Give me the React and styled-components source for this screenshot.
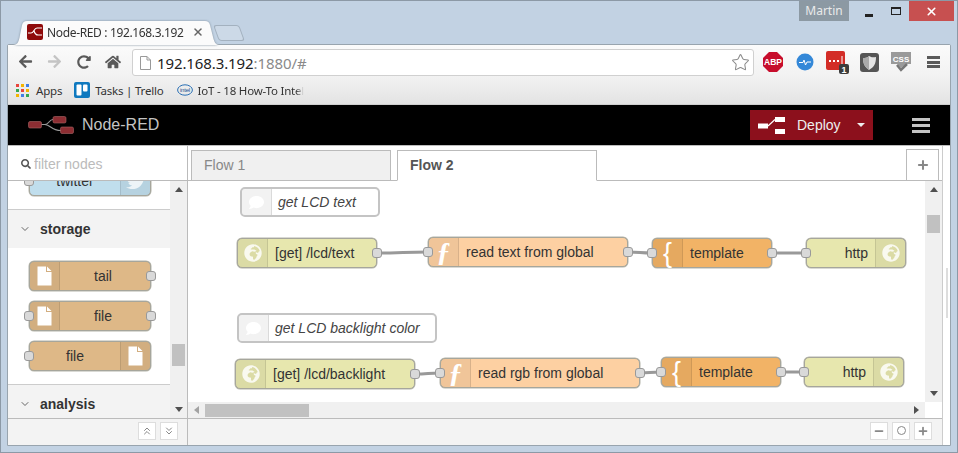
import React from 'react';
import styled, { createGlobalStyle } from 'styled-components';
import { FaArrowLeft, FaArrowRight, FaHome, FaRedoAlt, FaGlobeAfrica, FaComment, FaTwitter, FaSearch } from 'react-icons/fa';
import { Star, Plus, Minus, ChevronDown, ChevronsUp, ChevronsDown, X } from 'lucide-react';

const GlobalStyle = createGlobalStyle`
  html, body { margin: 0; padding: 0; background: #c2d2e3; }
  * { box-sizing: border-box; }
`;

// browser chrome
const Window = styled.div`
  width: 958px;
  height: 453px;
  display: flex;
  flex-direction: column;
  overflow: hidden;
  background: #c2d2e3;
  border: 1px solid #8c99a6;
  font-family: "Liberation Sans", Arial, sans-serif;
`;

const TitleBar = styled.div`
  height: 20px;
  flex: none;
  display: flex;
  justify-content: flex-end;
  padding-right: 3px;
`;

const UserBadge = styled.div`
  width: 50px;
  margin-right: 6px;
  background: #8c99a3;
  color: #eaeaea;
  font: 12px/20px "Noto Sans", sans-serif;
  text-align: center;
`;

const WinButton = styled.div`
  width: ${p => p.$w || 27}px;
  display: flex;
  align-items: center;
  justify-content: center;
  background: ${p => p.$bg || 'transparent'};
`;

const MinGlyph = styled.div`
  width: 8px;
  height: 3px;
  margin-top: 8px;
  background: #222;
`;

const MaxGlyph = styled.div`
  width: 10px;
  height: 8px;
  border: 1px solid #222;
  border-top-width: 2px;
  margin-top: -1px;
`;

const TabStrip = styled.div`
  height: 23px;
  flex: none;
  display: flex;
  align-items: flex-start;
  padding-left: 12px;
  position: relative;
  z-index: 2;
`;

const TabOutline = styled.div`
  filter: drop-shadow(0 0 1px #7f8e9c);
`;

const BrowserTab = styled.div`
  width: 206px;
  height: 24px;
  background: #fbfbfb;
  display: flex;
  align-items: center;
  padding: 0 0 2px 14px;
  clip-path: path('M0 24 C5 24 6 20 7 14 L9 4 C10 1 11 0 14 0 L192 0 C195 0 196 1 197 4 L200 16 C201 21 203 24 206 24 Z');
`;

const Favicon = styled.svg`
  width: 16px;
  height: 16px;
  flex: none;
  margin-right: 4px;
`;

const TabTitle = styled.span`
  font: 12px "Noto Sans", sans-serif;
  letter-spacing: -0.35px;
  color: #333;
  white-space: nowrap;
`;

const TabClose = styled(X)`
  margin-left: 8px;
  color: #666;
`;

const NewTab = styled.div`
  width: 26px;
  height: 16px;
  margin: 4px 0 0 -3px;
  background: #ccd9e7;
  border: 1px solid #a3b1bf;
  border-radius: 3px;
  transform: skewX(20deg);
`;

const Browser = styled.div`
  height: 402px;
  margin: 0 6px;
  flex: none;
  display: flex;
  flex-direction: column;
  background: #fff;
  border: 1px solid #98a4ae;
  border-radius: 2px 2px 0 0;
`;

const Toolbar = styled.div`
  height: 31px;
  flex: none;
  display: flex;
  align-items: center;
  padding-left: 3px;
  background: linear-gradient(#fbfbfb, #f2f2f2);
`;

const ToolButton = styled.div`
  width: 29px;
  height: 29px;
  margin-top: 2px;
  flex: none;
  display: flex;
  align-items: center;
  justify-content: center;
  color: ${p => p.$off ? '#c4c4c4' : '#5a5a5a'};
`;

const AddressBar = styled.div`
  width: 622px;
  height: 27px;
  margin: 4px 3px 0 5px;
  flex: none;
  display: flex;
  align-items: center;
  padding: 0 3px 0 7px;
  background: #fff;
  border: 1px solid #d0d0d0;
  border-radius: 3px;
`;

const Url = styled.div`
  flex: 1;
  margin-left: 6px;
  font: 15px "Noto Sans", sans-serif;
  letter-spacing: -0.1px;
  color: #222;
  span { color: #8a8a8a; }
`;

const ExtSlot = styled.div`
  width: 32px;
  height: 29px;
  flex: none;
  margin-top: 3px;
  display: flex;
  align-items: center;
  justify-content: center;
`;

const MenuBars = styled.div`
  width: 13px;
  height: 12px;
  border-top: 3px solid #5a5a5a;
  border-bottom: 3px solid #5a5a5a;
  position: relative;
  &::after {
    content: '';
    position: absolute;
    left: 0;
    right: 0;
    top: 1.5px;
    height: 3px;
    background: #5a5a5a;
  }
`;

const Bookmarks = styled.div`
  height: 29px;
  flex: none;
  display: flex;
  align-items: center;
  padding-left: 8px;
  background: linear-gradient(#f2f2f2, #e3e3e3);
  border-bottom: 1px solid #cfcfcf;
  overflow: hidden;
`;

const Bookmark = styled.div`
  display: flex;
  align-items: center;
  gap: ${p => p.$gap || 5}px;
  margin-right: ${p => p.$mr || 12}px;
  font: 11.5px "Noto Sans", sans-serif;
  letter-spacing: -0.2px;
  color: #333;
  white-space: nowrap;
`;

const FadedText = styled.span`
  -webkit-mask-image: linear-gradient(90deg, #000 92%, transparent);
  mask-image: linear-gradient(90deg, #000 92%, transparent);
`;

const AppsGrid = styled.div`
  display: grid;
  grid-template-columns: repeat(3, 3px);
  grid-auto-rows: 3px;
  gap: 2px;
`;

const AppDot = styled.i`
  background: ${p => p.$c};
`;

// node-red header
const Header = styled.header`
  height: 41px;
  flex: none;
  display: flex;
  align-items: center;
  padding: 0 20px;
  background: #000;
  border-bottom: 1px solid #bdbdbd;
`;

const Brand = styled.div`
  flex: 1;
  display: flex;
  align-items: center;
  gap: 8px;
  color: #c4c4c4;
  font-size: 16px;
`;

const LogoSvg = styled.svg`
  width: 46px;
  height: 18px;
  flex: none;
`;

const DeployButton = styled.div`
  width: 123px;
  height: 30px;
  display: flex;
  align-items: center;
  padding-left: 8px;
  background: #8c101c;
  color: #eee;
  font-size: 14px;
`;

const DeployLabel = styled.span`
  margin: 0 16px 0 12px;
`;

const Caret = styled.div`
  width: 0;
  height: 0;
  border-left: 4px solid transparent;
  border-right: 4px solid transparent;
  border-top: 4px solid ${p => p.$c || '#eee'};
`;

const Hamburger = styled.div`
  width: 18px;
  margin-left: 39px;
  display: flex;
  flex-direction: column;
  gap: 3px;
  i { height: 3px; background: #c4c4c4; }
`;

// main editor
const Main = styled.div`
  flex: 1;
  min-height: 0;
  display: flex;
`;

const Palette = styled.aside`
  width: 180px;
  flex: none;
  display: flex;
  flex-direction: column;
  border-right: 1px solid #bbb;
`;

const FilterRow = styled.div`
  height: 35px;
  flex: none;
  display: flex;
  align-items: center;
  gap: 3px;
  padding: 1px 0 0 13px;
  border-bottom: 1px solid #bbb;
  color: #555;
`;

const FilterInput = styled.input`
  width: 120px;
  border: 0;
  padding: 0;
  outline: 0;
  font: 14px "Liberation Sans", Arial, sans-serif;
  background: transparent;
  &::placeholder { color: #bbb; opacity: 1; }
`;

const PaletteBody = styled.div`
  flex: 1;
  min-height: 0;
  display: flex;
`;

const PaletteList = styled.div`
  width: 162px;
  flex: none;
  overflow: hidden;
`;

const Stack = styled.div`
  display: flex;
  flex-direction: column;
  gap: 10px;
  padding: ${p => p.$pad || '13px 0'};
  margin-top: ${p => p.$mt || 0}px;
`;

const Category = styled.div`
  height: 39px;
  display: flex;
  align-items: center;
  gap: 9px;
  padding-left: 11px;
  background: #f3f3f3;
  border-top: 1px solid #ccc;
  color: #333;
  font-size: 14px;
  font-weight: 700;
  svg { color: #666; }
`;

const NodeBox = styled.div`
  position: relative;
  width: ${p => p.$w || 122}px;
  height: 30px;
  flex: none;
  display: flex;
  flex-direction: ${p => p.$flip ? 'row-reverse' : 'row'};
  align-items: center;
  margin-left: ${p => p.$ml || 0}px;
  background: ${p => p.$bg};
  border: 1px solid #a6a69c;
  border-radius: 5px;
  box-shadow: 0 0 0 0.5px #b4b4aa;
  color: #333;
  font-size: 14px;
`;

const CanvasNode = styled(NodeBox)`
  position: absolute;
  left: ${p => p.$x}px;
  top: ${p => p.$y}px;
`;

const CommentNode = styled(CanvasNode)`
  border: 2px solid #c4c4c4;
  box-shadow: none;
  background: #fff;
  color: #444;
`;

const IconCell = styled.div`
  width: 30px;
  height: 100%;
  flex: none;
  display: flex;
  align-items: center;
  justify-content: center;
  background: rgba(0, 0, 0, 0.05);
  border-${p => p.$flip ? 'left' : 'right'}: 1px solid rgba(0, 0, 0, 0.1);
  border-radius: ${p => p.$flip ? '0 4px 4px 0' : '4px 0 0 4px'};
  color: #fff;
`;

const GlyphIcon = styled.span`
  color: #fff;
  font-family: ${p => p.$serif ? '"Liberation Serif", serif' : '"Liberation Sans", sans-serif'};
  font-style: ${p => p.$serif ? 'italic' : 'normal'};
  font-weight: ${p => p.$serif ? 700 : 400};
  font-size: ${p => p.$serif ? 28 : 27}px;
  line-height: 28px;
`;

const NodeLabel = styled.div`
  flex: 1;
  min-width: 0;
  white-space: nowrap;
  padding: ${p => p.$pad || '0 0 1px 7px'};
  text-align: ${p => p.$align || 'left'};
  font-style: ${p => p.$italic ? 'italic' : 'normal'};
`;

const Port = styled.div`
  position: absolute;
  top: 9px;
  ${p => p.$side}: -6px;
  width: 10px;
  height: 10px;
  background: #d9d9d9;
  border: 1px solid #999;
  border-radius: 3px;
`;

const Scrollbar = styled.div`
  background: #f0f0f0;
  display: flex;
  flex: ${p => p.$fill ? 1 : 'initial'};
  flex-direction: ${p => p.$h ? 'row' : 'column'};
  align-items: center;
  justify-content: space-between;
  padding: ${p => p.$h ? '0 6px' : '6px 0'};
  position: relative;
`;

const Thumb = styled.div`
  position: absolute;
  background: #c1c1c1;
  ${p => p.$h ? `height: 13px; top: 2px; left: ${p.$at}px; width: ${p.$len}px;`
    : `width: 13px; left: 2px; top: ${p.$at}px; height: ${p.$len}px;`}
`;

const Arrow = styled.div`
  width: 0;
  height: 0;
  ${p => ({
    up: 'border: 4px solid transparent; border-top: 0; border-bottom: 5px solid #505050;',
    down: 'border: 4px solid transparent; border-bottom: 0; border-top: 5px solid #505050;',
    left: 'border: 4px solid transparent; border-left: 0; border-right: 5px solid #a3a3a3;',
    right: 'border: 4px solid transparent; border-right: 0; border-left: 5px solid #505050;',
  }[p.$dir])}
`;

const Footer = styled.div`
  height: 27px;
  flex: none;
  display: flex;
  align-items: center;
  justify-content: flex-end;
  gap: 4px;
  padding: 0 ${p => p.$pr}px 3px 0;
  background: #f3f3f3;
  border-top: 1px solid #bbb;
`;

const FootButton = styled.div`
  width: 18px;
  height: 18px;
  display: flex;
  align-items: center;
  justify-content: center;
  background: #fff;
  border: 1px solid #ddd;
  color: ${p => p.$c || '#888'};
`;

const ZoomDot = styled.div`
  width: 9px;
  height: 9px;
  border: 1.5px solid #888;
  border-radius: 50%;
`;

const EditorColumn = styled.section`
  width: 755px;
  flex: none;
  display: flex;
  flex-direction: column;
  border-right: 1px solid #ccc;
`;

const SideGutter = styled.div`
  flex: 1;
  padding: 122px 0 0 3px;
`;

const GutterHandle = styled.div`
  width: 2px;
  height: 50px;
  background: #ddd;
`;

const FlowTabs = styled.div`
  height: 35px;
  flex: none;
  display: flex;
  align-items: flex-end;
  padding: 0 3px;
  border-bottom: 1px solid #bbb;
`;

const FlowTab = styled.div`
  width: 200px;
  height: 31px;
  margin-right: ${p => p.$active ? 0 : 6}px;
  margin-bottom: -1px;
  padding: 6px 0 0 12px;
  font-size: 14px;
  font-weight: ${p => p.$active ? 700 : 400};
  color: ${p => p.$active ? '#555' : '#888'};
  background: ${p => p.$active ? '#fff' : '#f0f0f0'};
  border: 1px solid #bbb;
  border-bottom-color: ${p => p.$active ? '#fff' : '#bbb'};
`;

const AddTab = styled.div`
  width: 33px;
  height: 32px;
  margin-left: auto;
  margin-bottom: -1px;
  display: flex;
  align-items: center;
  justify-content: center;
  color: #888;
  border: 1px solid #bbb;
`;

const WorkArea = styled.div`
  flex: 1;
  min-height: 0;
  display: grid;
  grid-template-columns: 737px 17px;
  grid-template-rows: 221px 16px;
`;

const Canvas = styled.div`
  position: relative;
  overflow: hidden;
  background: #fff;
`;

const WireLayer = styled.svg`
  position: absolute;
  left: 0;
  top: 0;
  width: 737px;
  height: 221px;
  fill: none;
  stroke: #999;
  stroke-width: 3;
`;

const FileIcon = () => (
  <svg width="15" height="20" viewBox="0 0 15 20">
    <path d="M0.5 0.5H9V6H14.5V19.5H0.5Z M10 0.5L14.5 5H10Z" fill="#fff" />
  </svg>
);

const Globe = () => <FaGlobeAfrica size={18} color="rgba(255,255,255,.82)" />;

const Bubble = () => <FaComment size={15} color="#fff" />;

const PaletteNode = ({ label, bg, flip, icon, ports }) => (
  <NodeBox $ml={21} $bg={bg} $flip={flip}>
    {ports.includes('l') && <Port $side="left" />}
    <IconCell $flip={flip}>{icon}</IconCell>
    <NodeLabel $align="center" $pad={flip ? '0' : '0 4px 0 0'}>{label}</NodeLabel>
    {ports.includes('r') && <Port $side="right" />}
  </NodeBox>
);

const YELLOW = '#e7e7ae';
const PEACH = '#fdd0a2';
const ORANGE = '#f2b366';
const TAN = '#deb887';

const fn = <GlyphIcon $serif>ƒ</GlyphIcon>;
const brace = <GlyphIcon>{'{'}</GlyphIcon>;

const flowNodes = [
  { label: '[get] /lcd/text', x: 49, y: 57, w: 140, bg: YELLOW, icon: <Globe />, ports: 'r' },
  { label: 'read text from global', x: 240, y: 56, w: 200, bg: PEACH, icon: fn, ports: 'lr' },
  { label: 'template', x: 464, y: 57, w: 120, bg: ORANGE, icon: brace, ports: 'lr' },
  { label: 'http', x: 618, y: 57, w: 100, bg: YELLOW, icon: <Globe />, ports: 'l', flip: true },
  { label: '[get] /lcd/backlight', x: 47, y: 178, w: 180, bg: YELLOW, icon: <Globe />, ports: 'r' },
  { label: 'read rgb from global', x: 252, y: 177, w: 200, bg: PEACH, icon: fn, ports: 'lr' },
  { label: 'template', x: 473, y: 176, w: 120, bg: ORANGE, icon: brace, ports: 'lr' },
  { label: 'http', x: 616, y: 176, w: 100, bg: YELLOW, icon: <Globe />, ports: 'l', flip: true },
];

const wires = [
  'M189 72 C215 72 215 71 240 71',
  'M440 71 C452 71 452 72 464 72',
  'M584 72 H618',
  'M227 193 C240 193 240 192 252 192',
  'M452 192 C462 192 462 191 473 191',
  'M593 191 H616',
];

const appColors = ['#e8453c', '#f4b400', '#3f7fe8', '#34a853', '#e8453c', '#f4b400', '#f4b400', '#3f7fe8', '#34a853'];

export default function App() {
  return (
    <>
      <GlobalStyle />
      <Window>
        <TitleBar>
          <UserBadge>Martin</UserBadge>
          <WinButton><MinGlyph /></WinButton>
          <WinButton><MaxGlyph /></WinButton>
          <WinButton $w={45} $bg="#c75050"><X size={13} color="#fff" strokeWidth={3} /></WinButton>
        </TitleBar>

        <TabStrip>
          <TabOutline>
            <BrowserTab>
              <Favicon viewBox="0 0 16 16">
                <rect width="16" height="16" rx="2" fill="#8f0a0a" />
                <path d="M1 9 H4 C7 9 7 4 10 4 H15 M7 7 C8 10 9 11 11 11 H15" fill="none" stroke="#fff" strokeWidth="1.2" />
              </Favicon>
              <TabTitle>Node-RED : 192.168.3.192</TabTitle>
              <TabClose size={12} strokeWidth={3} />
            </BrowserTab>
          </TabOutline>
          <NewTab />
        </TabStrip>

        <Browser>
          <Toolbar>
            <ToolButton><FaArrowLeft size={15} /></ToolButton>
            <ToolButton $off><FaArrowRight size={15} /></ToolButton>
            <ToolButton><FaRedoAlt size={14} /></ToolButton>
            <ToolButton><FaHome size={16} /></ToolButton>
            <AddressBar>
              <svg width="11" height="14" viewBox="0 0 11 14">
                <path d="M.5.5H7L10.5 4V13.5H.5Z M7 .5V4H10.5" fill="#fff" stroke="#999" />
              </svg>
              <Url>192.168.3.192<span>:1880/#</span></Url>
              <Star size={19} color="#8a8a8a" strokeWidth={1.3} />
            </AddressBar>
            <ExtSlot>
              <svg width="20" height="20" viewBox="0 0 20 20">
                <path d="M6 0H14L20 6V14L14 20H6L0 14V6Z" fill="#c70d2c" />
                <text x="10" y="13.2" textAnchor="middle" fontFamily="Liberation Sans" fontWeight="700" fontSize="8.5" fill="#fff">ABP</text>
              </svg>
            </ExtSlot>
            <ExtSlot>
              <svg width="18" height="18" viewBox="0 0 18 18">
                <circle cx="9" cy="9" r="8.5" fill="#3488d8" />
                <path d="M3 9.5H7L8 7L9.5 12L11 9H15" fill="none" stroke="#fff" strokeWidth="1" />
              </svg>
            </ExtSlot>
            <ExtSlot>
              <svg width="24" height="26" viewBox="0 0 24 26">
                <rect x="1" y="2" width="19" height="19" rx="2" fill="#d32d27" />
                <path d="M4 11h2v2H4zM8 11h2v2H8zM12 11h2v2h-2z" fill="#fff" />
                <rect x="16.5" y="7" width="1" height="9" fill="#fff" />
                <rect x="14" y="15" width="10" height="10" rx="2" fill="#3c3c3c" />
                <text x="19" y="23.5" textAnchor="middle" fontFamily="Liberation Sans" fontWeight="700" fontSize="9" fill="#fff">1</text>
              </svg>
            </ExtSlot>
            <ExtSlot>
              <svg width="19" height="19" viewBox="0 0 19 19">
                <rect width="19" height="19" rx="3" fill="#555" />
                <path d="M9 3C12 5 14 4 16 4C16 11 14 14 9 17C5 14 3 11 3 5C5 5 7 5 9 3Z" fill="#e3e3e3" />
                <path d="M3 5C5 5 7 5 9 3V17C5 14 3 11 3 5Z" fill="#aaa" />
              </svg>
            </ExtSlot>
            <ExtSlot>
              <svg width="20" height="20" viewBox="0 0 20 20">
                <path d="M0 0H20V12H15L10 16L6 12H0Z" fill="#9a9a9a" />
                <text x="10" y="10" textAnchor="middle" fontFamily="Liberation Sans" fontWeight="700" fontSize="8" fill="#fff">CSS</text>
                <path d="M6 13L10 18L16 12" fill="none" stroke="#777" strokeWidth="2.5" />
              </svg>
            </ExtSlot>
            <ExtSlot><MenuBars /></ExtSlot>
          </Toolbar>

          <Bookmarks>
            <Bookmark $gap={7} $mr={12}>
              <AppsGrid>
                {appColors.map((c, i) => <AppDot key={i} $c={c} />)}
              </AppsGrid>
              Apps
            </Bookmark>
            <Bookmark $gap={5} $mr={13}>
              <svg width="16" height="16" viewBox="0 0 16 16">
                <rect width="16" height="16" rx="2" fill="#0f79bf" />
                <rect x="2.5" y="2.5" width="5" height="11" rx="1" fill="#fff" />
                <rect x="9" y="2.5" width="4.5" height="7" rx="1" fill="#fff" />
              </svg>
              Tasks | Trello
            </Bookmark>
            <Bookmark $gap={5}>
              <svg width="16" height="12" viewBox="0 0 16 12">
                <ellipse cx="8" cy="6" rx="7.4" ry="5.2" fill="none" stroke="#2a6fb5" strokeWidth="1" />
                <text x="8" y="8" textAnchor="middle" fontFamily="Liberation Sans" fontSize="6" fill="#1a4f90">intel</text>
              </svg>
              <FadedText>IoT - 18 How-To Intel</FadedText>
            </Bookmark>
          </Bookmarks>

          <Header>
            <Brand>
              <LogoSvg viewBox="0 0 46 18">
                <path d="M13 8.5 H17 C21 8.5 21 3.5 25 3.5 M17 8.5 C23 9 23 14.5 33 14.5" fill="none" stroke="#999" strokeWidth="1.2" />
                <rect x="0.5" y="5.5" width="13" height="6.5" rx="1.5" fill="#8d2e33" stroke="#a66" strokeWidth=".6" />
                <rect x="25" y="0.5" width="13" height="6.5" rx="1.5" fill="#8d2e33" stroke="#a66" strokeWidth=".6" />
                <rect x="32.5" y="11" width="13" height="6.5" rx="1.5" fill="#8d2e33" stroke="#a66" strokeWidth=".6" />
              </LogoSvg>
              Node-RED
            </Brand>
            <DeployButton>
              <svg width="27" height="18" viewBox="0 0 27 18">
                <path d="M0 7.5H10V12.5H0ZM17 1H27V6H17ZM17 13H27V18H17Z" fill="#fff" />
                <path d="M10 10L17 3.5" stroke="#fff" strokeWidth="1.2" />
              </svg>
              <DeployLabel>Deploy</DeployLabel>
              <Caret />
            </DeployButton>
            <Hamburger><i /><i /><i /></Hamburger>
          </Header>

          <Main>
            <Palette>
              <FilterRow>
                <FaSearch size={10} />
                <FilterInput placeholder="filter nodes" readOnly />
              </FilterRow>
              <PaletteBody>
                <PaletteList>
                  <Stack $pad="0 0 13px" $mt={-15}>
                    <PaletteNode label="twitter" bg="#c0deed" flip ports="l" icon={<FaTwitter size={20} color="rgba(255,255,255,.75)" />} />
                  </Stack>
                  <Category><ChevronDown size={12} />storage</Category>
                  <Stack>
                    <PaletteNode label="tail" bg={TAN} ports="r" icon={<FileIcon />} />
                    <PaletteNode label="file" bg={TAN} ports="lr" icon={<FileIcon />} />
                    <PaletteNode label="file" bg={TAN} flip ports="l" icon={<FileIcon />} />
                  </Stack>
                  <Category><ChevronDown size={12} />analysis</Category>
                </PaletteList>
                <Scrollbar $fill>
                  <Arrow $dir="up" />
                  <Thumb $at={163} $len={22} />
                  <Arrow $dir="down" />
                </Scrollbar>
              </PaletteBody>
              <Footer $pr={9}>
                <FootButton><ChevronsUp size={12} /></FootButton>
                <FootButton><ChevronsDown size={12} /></FootButton>
              </Footer>
            </Palette>

            <EditorColumn>
              <FlowTabs>
                <FlowTab>Flow 1</FlowTab>
                <FlowTab $active>Flow 2</FlowTab>
                <AddTab><Plus size={14} strokeWidth={3.5} /></AddTab>
              </FlowTabs>
              <WorkArea>
                <Canvas>
                  <WireLayer viewBox="0 0 737 221">
                    {wires.map(d => <path key={d} d={d} />)}
                  </WireLayer>
                  <CommentNode $x={52} $y={6} $w={140}>
                    <IconCell><Bubble /></IconCell>
                    <NodeLabel $italic $pad="0 0 0 6px">get LCD text</NodeLabel>
                  </CommentNode>
                  <CommentNode $x={49} $y={132} $w={200}>
                    <IconCell><Bubble /></IconCell>
                    <NodeLabel $italic $pad="0 0 0 6px">get LCD backlight color</NodeLabel>
                  </CommentNode>
                  {flowNodes.map(n => (
                    <CanvasNode key={n.x + '-' + n.y} $x={n.x} $y={n.y} $w={n.w} $bg={n.bg} $flip={n.flip}>
                      {n.ports.includes('l') && <Port $side="left" />}
                      <IconCell $flip={n.flip}>{n.icon}</IconCell>
                      <NodeLabel $align={n.flip ? 'right' : 'left'} $pad={n.flip ? '0 7px 1px 0' : undefined}>{n.label}</NodeLabel>
                      {n.ports.includes('r') && <Port $side="right" />}
                    </CanvasNode>
                  ))}
                </Canvas>
                <Scrollbar>
                  <Arrow $dir="up" />
                  <Thumb $at={34} $len={18} />
                  <Arrow $dir="down" />
                </Scrollbar>
                <Scrollbar $h>
                  <Arrow $dir="left" />
                  <Thumb $h $at={17} $len={104} />
                  <Arrow $dir="right" />
                </Scrollbar>
                <div />
              </WorkArea>
              <Footer $pr={10}>
                <FootButton><Minus size={12} strokeWidth={3.5} /></FootButton>
                <FootButton><ZoomDot /></FootButton>
                <FootButton><Plus size={12} strokeWidth={3.5} /></FootButton>
              </Footer>
            </EditorColumn>
            <SideGutter><GutterHandle /></SideGutter>
          </Main>
        </Browser>
      </Window>
    </>
  );
}
